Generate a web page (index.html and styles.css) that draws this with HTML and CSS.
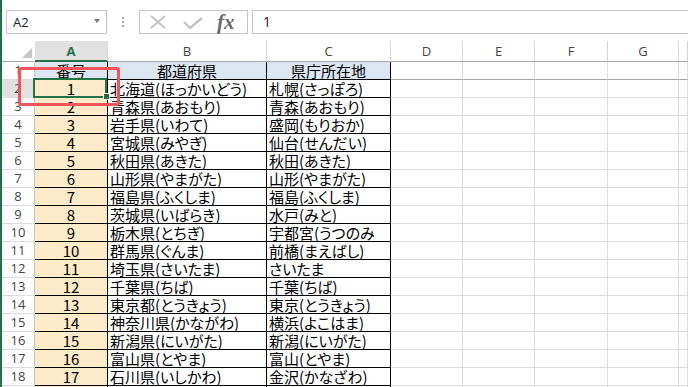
FILE: index.html
```html
<!DOCTYPE html>
<html lang="ja">
<head>
<meta charset="utf-8">
<title>Excel</title>
<link rel="stylesheet" href="styles.css">
</head>
<body>
<div class="app">
  <div class="fbar">
    <div class="namebox"><span>A2</span><span class="nb-arrow"></span></div>
    <div class="dots"><i></i><i></i><i></i></div>
    <div class="fbtns">
      <svg class="ic-x" width="18" height="14" viewBox="0 0 18 14"><path d="M2 1 L16 13 M16 1 L2 13" stroke="#c3c3c3" stroke-width="2" fill="none"/></svg>
      <svg class="ic-ok" width="20" height="12" viewBox="0 0 20 12"><path d="M1 5 L7 11 L19 1" stroke="#c3c3c3" stroke-width="2.4" fill="none"/></svg>
      <span class="fx">fx</span>
    </div>
    <div class="finput">1</div>
  </div>
  <div class="sheet">
    <div class="c h corner"><svg width="33" height="20" viewBox="0 0 33 20"><path d="M20 17 L30 17 L30 7 Z" fill="#c6c6c6"/></svg></div>
    <div class="c h sel">A</div><div class="c h">B</div><div class="c h">C</div><div class="c h">D</div><div class="c h">E</div><div class="c h">F</div><div class="c h">G</div><div class="c h"></div>

    <div class="c rh">1</div><div class="c t hd">番号</div><div class="c t hd">都道府県</div><div class="c t hd">県庁所在地</div><div class="c r1"></div><div class="c r1"></div><div class="c r1"></div><div class="c r1"></div><div class="c r1"></div>

    <div class="c rh rsel">2</div><div class="c t a selcell">1</div><div class="c t l">北海道(ほっかいどう)</div><div class="c t l">札幌(さっぽろ)</div><div class="c"></div><div class="c"></div><div class="c"></div><div class="c"></div><div class="c"></div>

    <div class="c rh">3</div><div class="c t a">2</div><div class="c t l">青森県(あおもり)</div><div class="c t l">青森(あおもり)</div><div class="c"></div><div class="c"></div><div class="c"></div><div class="c"></div><div class="c"></div>

    <div class="c rh">4</div><div class="c t a">3</div><div class="c t l">岩手県(いわて)</div><div class="c t l">盛岡(もりおか)</div><div class="c"></div><div class="c"></div><div class="c"></div><div class="c"></div><div class="c"></div>

    <div class="c rh">5</div><div class="c t a">4</div><div class="c t l">宮城県(みやぎ)</div><div class="c t l">仙台(せんだい)</div><div class="c"></div><div class="c"></div><div class="c"></div><div class="c"></div><div class="c"></div>

    <div class="c rh">6</div><div class="c t a">5</div><div class="c t l">秋田県(あきた)</div><div class="c t l">秋田(あきた)</div><div class="c"></div><div class="c"></div><div class="c"></div><div class="c"></div><div class="c"></div>

    <div class="c rh">7</div><div class="c t a">6</div><div class="c t l">山形県(やまがた)</div><div class="c t l">山形(やまがた)</div><div class="c"></div><div class="c"></div><div class="c"></div><div class="c"></div><div class="c"></div>

    <div class="c rh">8</div><div class="c t a">7</div><div class="c t l">福島県(ふくしま)</div><div class="c t l">福島(ふくしま)</div><div class="c"></div><div class="c"></div><div class="c"></div><div class="c"></div><div class="c"></div>

    <div class="c rh">9</div><div class="c t a">8</div><div class="c t l">茨城県(いばらき)</div><div class="c t l">水戸(みと)</div><div class="c"></div><div class="c"></div><div class="c"></div><div class="c"></div><div class="c"></div>

    <div class="c rh">10</div><div class="c t a">9</div><div class="c t l">栃木県(とちぎ)</div><div class="c t l"><span class="clipin">宇都宮(うつのみや)</span></div><div class="c"></div><div class="c"></div><div class="c"></div><div class="c"></div><div class="c"></div>

    <div class="c rh">11</div><div class="c t a">10</div><div class="c t l">群馬県(ぐんま)</div><div class="c t l">前橋(まえばし)</div><div class="c"></div><div class="c"></div><div class="c"></div><div class="c"></div><div class="c"></div>

    <div class="c rh">12</div><div class="c t a">11</div><div class="c t l">埼玉県(さいたま)</div><div class="c t l">さいたま</div><div class="c"></div><div class="c"></div><div class="c"></div><div class="c"></div><div class="c"></div>

    <div class="c rh">13</div><div class="c t a">12</div><div class="c t l">千葉県(ちば)</div><div class="c t l">千葉(ちば)</div><div class="c"></div><div class="c"></div><div class="c"></div><div class="c"></div><div class="c"></div>

    <div class="c rh">14</div><div class="c t a">13</div><div class="c t l">東京都(とうきょう)</div><div class="c t l">東京(とうきょう)</div><div class="c"></div><div class="c"></div><div class="c"></div><div class="c"></div><div class="c"></div>

    <div class="c rh">15</div><div class="c t a">14</div><div class="c t l">神奈川県(かながわ)</div><div class="c t l">横浜(よこはま)</div><div class="c"></div><div class="c"></div><div class="c"></div><div class="c"></div><div class="c"></div>

    <div class="c rh">16</div><div class="c t a">15</div><div class="c t l">新潟県(にいがた)</div><div class="c t l">新潟(にいがた)</div><div class="c"></div><div class="c"></div><div class="c"></div><div class="c"></div><div class="c"></div>

    <div class="c rh">17</div><div class="c t a">16</div><div class="c t l">富山県(とやま)</div><div class="c t l">富山(とやま)</div><div class="c"></div><div class="c"></div><div class="c"></div><div class="c"></div><div class="c"></div>

    <div class="c rh">18</div><div class="c t a">17</div><div class="c t l">石川県(いしかわ)</div><div class="c t l">金沢(かなざわ)</div><div class="c"></div><div class="c"></div><div class="c"></div><div class="c"></div><div class="c"></div>

    <div class="c rh">19</div><div class="c t a">18</div><div class="c t l">福井県(ふくい)</div><div class="c t l">福井(ふくい)</div><div class="c"></div><div class="c"></div><div class="c"></div><div class="c"></div><div class="c"></div>
  </div>
  <div class="annot"></div>
</div>
</body>
</html>
```

FILE: styles.css
```css
html, body {
  margin: 0;
  padding: 0;
  background: #ffffff;
}
body {
  width: 688px;
  height: 387px;
  overflow: hidden;
  font-family: "Open Sans", "Noto Sans CJK JP", sans-serif;
}
.app {
  position: relative;
  height: 387px;
  border-left: 2px solid #217346;
  overflow: hidden;
}

/* formula bar */
.fbar {
  display: flex;
  align-items: flex-start;
  height: 41px;
  box-sizing: border-box;
  padding: 10px 0 0 4px;
}
.namebox {
  width: 101px;
  height: 24px;
  box-sizing: border-box;
  border: 1px solid #c6c6c6;
  display: flex;
  align-items: center;
  justify-content: space-between;
  padding: 0 6px;
  font-size: 13px;
  color: #222;
}
.nb-arrow {
  width: 0;
  height: 0;
  border-left: 3px solid transparent;
  border-right: 3px solid transparent;
  border-top: 4px solid #777;
  margin-top: -2px;
}
.dots {
  width: 32px;
  height: 24px;
  display: flex;
  flex-direction: column;
  align-items: center;
  justify-content: center;
  gap: 2px;
}
.dots i {
  display: block;
  width: 2px;
  height: 2px;
  background: #a8a8a8;
}
.fbtns {
  width: 109px;
  height: 24px;
  box-sizing: border-box;
  border: 1px solid #c6c6c6;
  display: flex;
  align-items: center;
  padding-left: 9px;
}
.ic-ok { margin-left: 16px; margin-top: 2px; }
.fx {
  margin-left: 14px;
  font-family: "Liberation Serif", serif;
  font-style: italic;
  font-weight: bold;
  font-size: 21px;
  line-height: 20px;
  color: #6a6a6a;
}
.finput {
  flex: 1;
  margin-left: 4px;
  height: 24px;
  box-sizing: border-box;
  border: 1px solid #c6c6c6;
  border-right: none;
  padding-left: 10px;
  font-size: 14px;
  line-height: 22px;
  color: #222;
}

/* sheet grid */
.sheet {
  display: grid;
  grid-template-columns: 33px 73px 159px 124px 72px 72px 73px 71px 1fr;
  grid-template-rows: 21px repeat(19, 18px);
}
.c {
  box-sizing: border-box;
  border-right: 1px solid #dadcdd;
  border-bottom: 1px solid #dadcdd;
  overflow: hidden;
  white-space: nowrap;
  font-family: "Noto Sans CJK JP", sans-serif;
  font-size: 15px;
  line-height: 17px;
  color: #000;
}
.h {
  font-family: "Open Sans", sans-serif;
  font-size: 13px;
  line-height: 20px;
  color: #444;
  text-align: center;
  border-right-color: #d5d5d5;
  border-bottom-color: #ababab;
}
.h.sel {
  background: #e1e1e1;
  color: #217346;
  font-weight: bold;
  border-bottom: 2px solid #217346;
}
.corner {
  border-right-color: #ffffff;
}
.corner svg { display: block; }
.rh {
  font-family: "Open Sans", sans-serif;
  font-size: 13px;
  line-height: 17px;
  color: #444;
  text-align: center;
  border-right-color: #c6c6c6;
  border-bottom-color: #dadcdd;
}
.rh.rsel {
  background: #e1e1e1;
  color: #217346;
}
.r1 {
  border-bottom-color: #a6a6a6;
}
.t {
  border-right-color: #000;
  border-bottom-color: #000;
}
.hd {
  background: #dce6f1;
  text-align: center;
}
.a {
  background: #fdeac9;
  text-align: center;
}
.l {
  padding-left: 2px;
  font-feature-settings: "palt";
}
.clipin {
  display: block;
  width: 105px;
  overflow: hidden;
}
.selcell {
  position: relative;
  overflow: visible;
}
.selcell::after {
  content: "";
  position: absolute;
  left: -2px;
  top: -2px;
  right: 0;
  bottom: -1px;
  border: 2px solid #217346;
  z-index: 2;
}
.selcell::before {
  content: "";
  position: absolute;
  right: -3px;
  bottom: -3px;
  width: 5px;
  height: 5px;
  background: #217346;
  border: 1px solid #fff;
  z-index: 3;
}

/* annotation */
.annot {
  position: absolute;
  left: 16px;
  top: 67px;
  width: 102px;
  height: 39px;
  box-sizing: border-box;
  border: 3px solid #f2545b;
  border-radius: 3px;
  z-index: 5;
}
```
